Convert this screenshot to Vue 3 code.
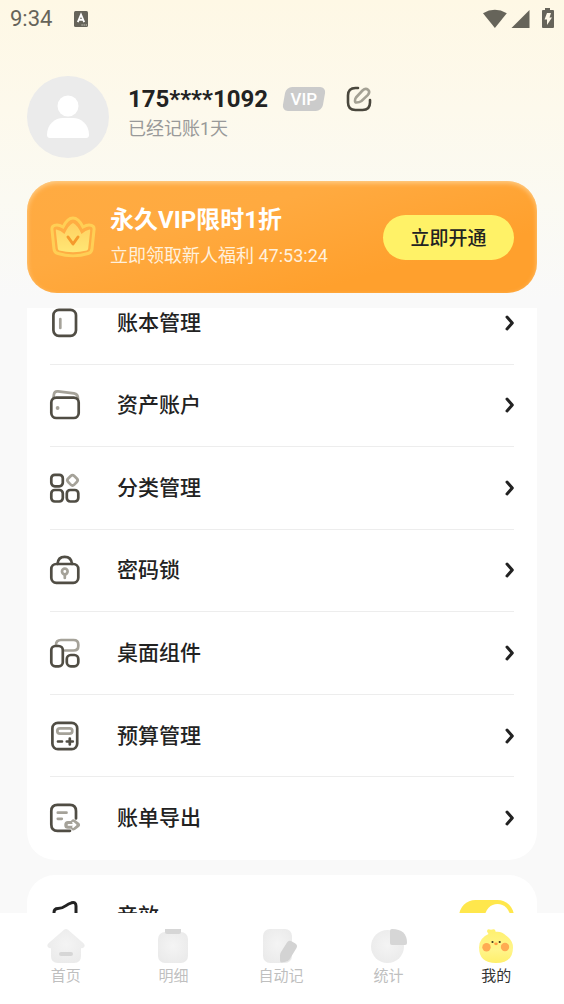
<script setup>
import { ref } from 'vue'

const menu = [
  { id: 'book', label: '账本管理' },
  { id: 'wallet', label: '资产账户' },
  { id: 'category', label: '分类管理' },
  { id: 'lock', label: '密码锁' },
  { id: 'widget', label: '桌面组件' },
  { id: 'budget', label: '预算管理' },
  { id: 'export', label: '账单导出' },
]

const tabs = [
  { id: 'home', label: '首页' },
  { id: 'list', label: '明细' },
  { id: 'auto', label: '自动记' },
  { id: 'stats', label: '统计' },
  { id: 'mine', label: '我的' },
]

const active = ref('mine')
const sound = ref(true)
</script>

<template>
  <div class="page">
    <div class="status">
      <span class="clock">9:34</span>
      <svg class="ime" width="14" height="16" viewBox="0 0 14 16">
        <rect width="14" height="16" rx="1.5" fill="#66645a" />
        <path d="M3.8 11.2 7 3.6l3.2 7.6M5 8.8h4" fill="none" stroke="#fff" stroke-width="1.8" />
        <path d="M7.5 14h1.2M9.6 14h1.2M11.7 14h1.2" stroke="#dddacd" stroke-width="1.2" />
      </svg>
      <svg class="signals" width="72" height="22" viewBox="0 0 72 22">
        <g fill="#66645a">
          <path d="M1 5.2Q12.800-1.500 24.800 5.200L12.900 20Z" />
          <path d="M47.500 2v18h-18z" />
          <path d="M63 0h5v2h3q1 0 1 1v16q0 1-1 1H61q-1 0-1-1V3q0-1 1-1h2z" />
        </g>
        <path d="M65 5h4l-1.500 4.500H70L65 17v-5.500h-2.500z" fill="#fff9e8" />
      </svg>
    </div>

    <header class="profile">
      <svg class="avatar" viewBox="0 0 82 82" role="img" aria-label="头像">
        <circle cx="41" cy="41" r="41" fill="#ebebeb" />
        <circle cx="41" cy="30" r="10.500" fill="#fff" />
        <path d="M20 59c0-11 8-17 16-17h10c8 0 16 6 16 17q0 3-3 3H23q-3 0-3-3z" fill="#fff" />
      </svg>
      <div class="who">
        <div class="name-line">
          <h1>175****1092</h1>
          <span class="vip-badge"><span>VIP</span></span>
          <button class="edit" type="button" aria-label="编辑">
            <svg width="26" height="26" viewBox="0 0 26 26" fill="none" stroke-width="2.600" stroke-linecap="round">
              <path d="M12 2H9.500C4.500 2 2 4.500 2 9.500v7C2 21.500 4.500 24 9.500 24h7c5 0 7.500-2.500 7.500-7.500V14" stroke="#4a473d" />
              <path d="M10 11.500 16.500 4.500q3-3 5.500-.8t-.3 5.500L15.500 15q-2 1.500-5 1.500-1.600 0-1.500-1.800.1-2 1-3.200z" stroke="#a4a194" />
            </svg>
          </button>
        </div>
        <p>已经记账1天</p>
      </div>
    </header>

    <section class="banner">
      <svg class="crown" width="46" height="42" viewBox="0 0 46 42">
        <defs>
          <linearGradient id="crownFill" x1="0" y1="0" x2="0" y2="1">
            <stop offset="0" stop-color="#ffd061" />
            <stop offset="1" stop-color="#ffe775" />
          </linearGradient>
        </defs>
        <path d="M7 9c-4 0-5.500 2-5 5l2 19c.3 3 2 4 4 4.500 9 3 21 3 30 0 2-.5 3.700-1.500 4-4.500l2-19c.5-3-1-5-5-5-2 0-4 .8-6 2C31 7 28 2 23 2s-8 5-10 9c-2-1.200-4-2-6-2z" fill="#ffad43" stroke="#ffcf55" stroke-width="3" />
        <path d="M6.500 13.500q4 .5 8 4.500Q18.500 9 23 7q4.500 2 8.500 11 4-4 8-4.500.8-.1.700 1l-2 18q-.2 1.500-1.500 2-13.700 3.500-27.400 0-1.300-.5-1.500-2l-2-18q-.1-1.100.7-1z" fill="url(#crownFill)" />
        <path d="m18 21 5 7 5-7" fill="none" stroke="#f59a2c" stroke-width="3" stroke-linecap="round" stroke-linejoin="round" />
      </svg>
      <div class="offer">
        <h2>永久VIP限时1折</h2>
        <p>立即领取新人福利 47:53:24</p>
      </div>
      <button class="open" type="button">立即开通</button>
    </section>

    <main class="scroll">
      <nav class="card menu">
        <a v-for="m in menu" :key="m.id" class="row" href="#">
          <svg class="icon" viewBox="0 0 32 32" fill="none" stroke="#504d44" stroke-width="2.700" stroke-linecap="round" stroke-linejoin="round">
            <template v-if="m.id === 'book'">
              <rect x="4.400" y="2.800" width="22.600" height="26" rx="5.500" />
              <path d="M11.300 12v9" stroke="#a5a299" />
            </template>
            <template v-else-if="m.id === 'wallet'">
              <path d="M4.500 8.500 5 5Q5.500 2 9 2.400l16 2Q29 5 29 9.500" stroke="#a5a299" />
              <rect x="2.300" y="8.600" width="27.400" height="20.400" rx="5" />
              <circle cx="8.600" cy="19" r="1.900" fill="#a5a299" stroke="none" />
            </template>
            <template v-else-if="m.id === 'category'">
              <rect x="2.300" y="2.800" width="11.500" height="11.500" rx="3.500" />
              <rect x="2.300" y="18" width="11.500" height="11.500" rx="3.500" />
              <rect x="17.800" y="18" width="11.500" height="11.500" rx="3.500" />
              <rect x="19.200" y="4" width="8.600" height="8.600" rx="2.500" transform="rotate(45 23.500 8.300)" stroke="#a5a299" />
            </template>
            <template v-else-if="m.id === 'lock'">
              <path d="M8.500 10q.5-7.200 7.200-7.200T23 10" />
              <rect x="2.300" y="10" width="27" height="18.800" rx="5" />
              <circle cx="15.800" cy="17.500" r="2.800" stroke="#a5a299" />
              <path d="M15.800 21v3" stroke="#a5a299" />
            </template>
            <template v-else-if="m.id === 'widget'">
              <path d="M7 8q0-5 5-5h12.500q4.800 0 4.800 4.500V9q0 4.500-4.800 4.500H16" stroke="#a5a299" />
              <rect x="2.300" y="9" width="11.500" height="20.300" rx="4" />
              <rect x="17.800" y="18" width="11.500" height="11.300" rx="4" />
            </template>
            <template v-else-if="m.id === 'budget'">
              <rect x="3.400" y="2.800" width="24.800" height="26.400" rx="5.500" />
              <rect x="8.300" y="8.300" width="15" height="5.400" rx="2.700" stroke="#a5a299" />
              <path d="M9 21.500h4M17.800 21.500h6M20.800 18.500v6" />
            </template>
            <template v-else>
              <path d="M27 16.500V9q0-6.200-6-6.200H8.500q-6.200 0-6.200 6.200v13.500q0 6.300 6.200 6.300H21" />
              <path d="M8.800 10.700h8.700M8.800 16.800h4" stroke="#a5a299" />
              <path d="M19 19.800h3.500q.8-2.600 3-1.400l4 3q1.700 1.500 0 3l-4 3q-2.200 1.200-3-1.400H19q-3 0-3-3.100t3-3.100z" fill="#a5a299" stroke="#a5a299" stroke-width="1.500" />
              <path d="M19.500 22.900h6M24 20.800l2.600 2.100-2.600 2.100" stroke="#fff" stroke-width="1.800" />
            </template>
          </svg>
          <span class="label">{{ m.label }}</span>
          <svg class="chevron" width="10" height="18" viewBox="0 0 10 18">
            <path d="M3 3 8.300 9 3 15" fill="none" stroke="#222" stroke-width="3" stroke-linecap="round" stroke-linejoin="round" />
          </svg>
        </a>
      </nav>

      <section class="card">
        <div class="row">
          <svg class="icon" viewBox="0 0 32 32" fill="none" stroke="#222" stroke-width="3" stroke-linecap="round" stroke-linejoin="round">
            <path d="M27 27V6q0-4.500-4.500-3.200-3 1-5.500 2.800Q13 8.500 9 8.500q-4 0-4 4v7q0 4 4 4 4 0 8 3l5.500 3Q27 31 27 27z" />
          </svg>
          <label class="label" for="sound">音效</label>
          <input id="sound" v-model="sound" class="switch" type="checkbox" />
        </div>
      </section>
    </main>

    <nav class="tabbar">
      <button v-for="t in tabs" :key="t.id" type="button" class="tab" :class="{ on: active === t.id }" @click="active = t.id">
        <svg width="38" height="34" viewBox="0 0 38 34">
          <defs>
            <radialGradient :id="'soft-' + t.id" cx=".5" cy=".45" r=".75">
              <stop offset="0" stop-color="#f4f4f4" />
              <stop offset="1" stop-color="#e8e8e8" />
            </radialGradient>
            <linearGradient :id="'chick-' + t.id" x1="0" y1="0" x2="0" y2="1">
              <stop offset="0" stop-color="#fff06e" />
              <stop offset=".6" stop-color="#fff58c" />
              <stop offset="1" stop-color="#ffef6b" />
            </linearGradient>
          </defs>
          <template v-if="t.id === 'home'">
            <path d="M17 .8q2-1.400 4 0l15.500 13.500q2 2 .5 4-1 1-3 1V27q0 7-7 7H11q-7 0-7-7v-7.700q-2 0-3-1-1.500-2 .5-4z" :fill="`url(#soft-${t.id})`" />
            <rect x="12" y="23" width="14" height="4" rx="2" fill="#d6d6d6" />
          </template>
          <template v-else-if="t.id === 'list'">
            <rect x="4" y="3" width="30" height="31" rx="7" :fill="`url(#soft-${t.id})`" />
            <path d="M11 0h16v3q0 2-2 2H13q-2 0-2-2z" fill="#d6d6d6" />
          </template>
          <template v-else-if="t.id === 'auto'">
            <rect x="1" y="0" width="29" height="34" rx="7" :fill="`url(#soft-${t.id})`" />
            <path d="M25 13.500q1.500-2.500 4-1.500l4 2.200q3 1.800 1.500 4.800l-7 11.500q-1.500 2-4 2.300l-4 .7q-1.500 0-1.500-2v-5q0-2 1-3.500z" fill="#d3d3d3" />
          </template>
          <template v-else-if="t.id === 'stats'">
            <circle cx="17.500" cy="17.500" r="16.500" :fill="`url(#soft-${t.id})`" />
            <path d="M22 0q15 0 15 14 0 2-2 2H22q-2 0-2-2V2q0-2 2-2z" fill="#d6d6d6" />
          </template>
          <template v-else>
            <path d="M10 2.500Q10-1 14 .8q5-1.500 4.500 2Q25 2 29 6.500q7 5 7 12Q36 34 19 34 2 34 2 18.500 2 9 11.500 5z" :fill="`url(#chick-${t.id})`" />
            <circle cx="9.500" cy="18.300" r="4.200" fill="#ffab52" />
            <circle cx="28" cy="18" r="4.200" fill="#ffab52" />
            <circle cx="15.500" cy="13" r="1.100" fill="#40341c" />
            <circle cx="22.700" cy="13" r="1.100" fill="#40341c" />
            <ellipse cx="19" cy="14.800" rx="1.800" ry="1.400" fill="#ff9d44" />
          </template>
        </svg>
        <span>{{ t.label }}</span>
      </button>
    </nav>
  </div>
</template>

<style scoped>
.page {
  display: flex;
  flex-direction: column;
  height: 100vh;
  overflow: hidden;
  font-family: Roboto, "Noto Sans CJK SC", sans-serif;
  color: #222;
  background: linear-gradient(180deg, #fef8e5 0, #fdf9ec 110px, #fbfaf2 200px, #f9f9f9 300px);
}

h1, h2, p { margin: 0; }
button { border: 0; padding: 0; background: none; font-family: inherit; cursor: pointer; }
svg { display: block; flex: none; }

.status {
  display: flex;
  align-items: center;
  height: 38px;
  padding: 0 10px;
  color: #66645a;
}
.clock { font-size: 22px; line-height: 38px; }
.ime { margin-left: 22px; }
.signals { margin-left: auto; }

.profile {
  display: flex;
  align-items: center;
  gap: 19px;
  padding: 38px 27px 0;
}
.avatar { width: 82px; height: 82px; }
.who { padding-bottom: 8px; }
.name-line { display: flex; align-items: center; height: 32px; }
h1 { font-size: 24px; line-height: 32px; font-weight: 700; }
.vip-badge {
  width: 40px;
  height: 24px;
  margin-left: 16px;
  border-radius: 6px;
  background: #cbcbcb;
  transform: skewX(-10deg);
  text-align: center;
}
.vip-badge span {
  display: block;
  transform: skewX(10deg);
  color: #fff;
  font-size: 17px;
  line-height: 25px;
  font-weight: 500;
}
.edit { margin-left: 22px; }
.who p { font-size: 18px; line-height: 28px; color: #999; }

.banner {
  display: flex;
  align-items: center;
  box-sizing: border-box;
  min-height: 112px;
  margin: 23px 27px 15px;
  padding: 0 23px;
  border-radius: 30px;
  background: linear-gradient(165deg, #ffab42 0%, #ffaa40 35%, #ffa02d 75%);
  box-shadow: inset 0 2px 5px rgba(255, 232, 190, 0.6);
}
.offer { flex: 1; margin-left: 14px; padding-top: 2px; color: #fff; }
.offer h2 { font-size: 24px; line-height: 36px; font-weight: 700; }
.offer p { font-size: 18px; line-height: 36px; color: #fff0dc; }
.open {
  width: 131px;
  height: 45px;
  padding-bottom: 2px;
  border-radius: 23px;
  background: #fff267;
  color: #222;
  font-size: 19px;
  font-weight: 500;
}

.scroll { flex: 1; min-height: 0; overflow: hidden; }
.card {
  display: grid;
  grid-auto-rows: 1fr;
  margin: 0 27px 15px;
  padding: 0 23px;
  border-radius: 28px;
  background: #fff;
}
.menu { min-height: 578px; margin-top: -26px; }
.row {
  display: flex;
  align-items: center;
  min-height: 82px;
  box-sizing: border-box;
  color: #222;
  text-decoration: none;
}
.menu .row { border-bottom: 1px solid #ededed; }
.menu .row:last-child { border-bottom-color: transparent; }
.icon { width: 32px; height: 32px; margin-left: -1px; }
.label { flex: 1; margin-left: 36px; font-size: 21px; line-height: 30px; font-weight: 500; }
.switch {
  appearance: none;
  display: flex;
  justify-content: flex-end;
  align-items: center;
  box-sizing: border-box;
  width: 55px;
  height: 33px;
  margin: 0;
  padding: 4px;
  border-radius: 17px;
  background: #ddd;
}
.switch::before {
  content: "";
  width: 25px;
  height: 25px;
  border-radius: 50%;
  background: #fff;
}
.switch:not(:checked) { justify-content: flex-start; }
.switch:checked { background: #ffe74c; }

.tabbar {
  display: flex;
  box-sizing: border-box;
  min-height: 91px;
  padding: 16px 14px 0 12px;
  background: #fff;
}
.tab {
  flex: 1;
  display: flex;
  flex-direction: column;
  align-items: center;
  color: #bfbfbf;
  font-size: 15px;
  line-height: 26px;
}
.tab.on { color: #333; }
</style>

<style>
body { margin: 0; background: #f9f9f9; }
</style>
